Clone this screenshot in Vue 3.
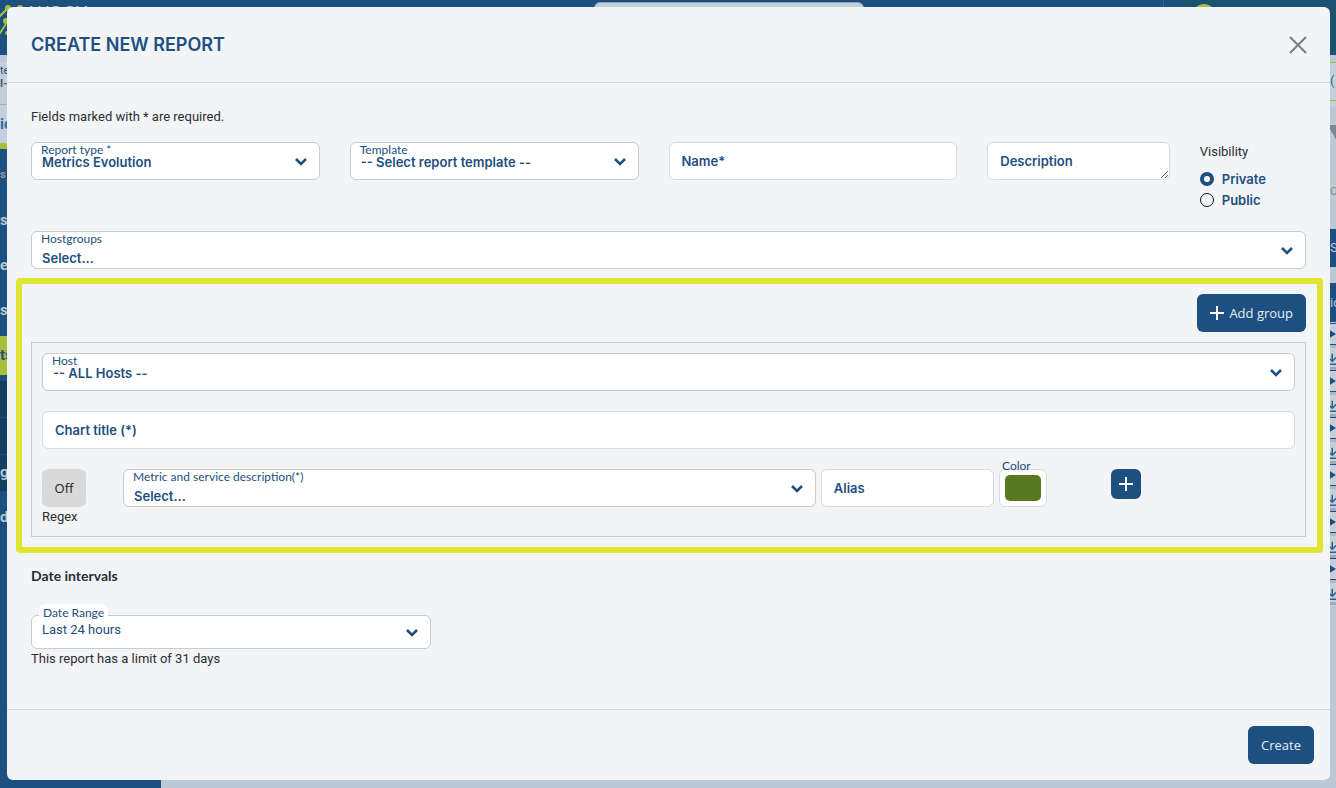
<script setup>
import { ref } from 'vue'

const reportType = ref('Metrics Evolution')
const template = ref('-- Select report template --')
const visibility = ref('Private')
const hostgroup = ref('Select...')
const host = ref('-- ALL Hosts --')
const metric = ref('Select...')
const range = ref('Last 24 hours')
const color = ref('#5a7821')
const regex = ref(false)
const reportRows = 6
</script>

<template>
  <div class="page">
    <div class="backdrop" aria-hidden="true">
      <header class="topbar">
        <svg class="logo" width="24" height="40" viewBox="0 0 24 40">
          <g stroke="#a9bf3c" stroke-width="2" fill="#a9bf3c">
            <path d="M-2 18L8 8M20 8L6 22M-2 36L6 24" fill="none" />
            <circle cx="8" cy="8" r="2" />
            <circle cx="20" cy="8" r="2" />
            <circle cx="6" cy="21" r="2" />
            <circle cx="7" cy="33" r="1" />
          </g>
        </svg>
        <span class="brand">WOCU</span>
        <span class="search"></span>
        <span class="account"><span class="avatar"></span></span>
      </header>
      <div class="columns">
        <div class="rail">
          <div class="realm"><span class="realm-label">te</span><span class="realm-name">I-</span></div>
          <div class="tab">ic</div>
          <div class="item warm">s</div>
          <div class="item">s</div>
          <div class="item">er</div>
          <div class="item">s</div>
          <div class="item active">ts</div>
          <div class="sub"></div>
          <div class="sub"></div>
          <div class="sub">g</div>
          <div class="item last">d</div>
        </div>
        <div class="edge">
          <div class="crumb">(</div>
          <div class="filter"></div>
          <div class="caption">C</div>
          <div class="chip">Sc</div>
          <div class="thead">ic</div>
          <div v-for="n in reportRows" :key="n" class="actions">
            <div class="play"><svg width="8" height="12" viewBox="0 0 8 12"><path d="M0 1L8 6L0 11Z" fill="#1d4f80" /></svg></div>
            <div class="save"><svg width="8" height="16" viewBox="0 0 8 16"><path d="M3 1V11M0 8L3 11L8 6M0 15H8" fill="none" stroke="#2b6191" stroke-width="2" /></svg></div>
          </div>
        </div>
      </div>
    </div>

    <section class="modal" role="dialog" aria-labelledby="dialog-title">
      <header class="modal-head">
        <h1 id="dialog-title">CREATE NEW REPORT</h1>
        <button class="close" type="button" aria-label="Close">
          <svg width="18" height="18" viewBox="0 0 18 18"><path d="M1 1L17 17M17 1L1 17" stroke="#7b7d80" stroke-width="2" fill="none" /></svg>
        </button>
      </header>

      <form class="modal-body" @submit.prevent>
        <p class="note">Fields marked with * are required.</p>

        <div class="row">
          <div class="cell">
            <div class="field">
              <label for="type">Report type *</label>
              <select id="type" v-model="reportType"><option>Metrics Evolution</option></select>
              <svg class="chevron" viewBox="0 0 12 8"><path d="M1 1L6 6L11 1" /></svg>
            </div>
          </div>
          <div class="cell">
            <div class="field">
              <label for="template">Template</label>
              <select id="template" v-model="template"><option>-- Select report template --</option></select>
              <svg class="chevron" viewBox="0 0 12 8"><path d="M1 1L6 6L11 1" /></svg>
            </div>
          </div>
          <div class="cell"><input class="text" type="text" placeholder="Name*" aria-label="Name" /></div>
          <div class="cell"><textarea class="text" placeholder="Description" aria-label="Description"></textarea></div>
          <fieldset class="visibility">
            <legend>Visibility</legend>
            <label><input v-model="visibility" type="radio" name="visibility" value="Private" />Private</label>
            <label><input v-model="visibility" type="radio" name="visibility" value="Public" />Public</label>
          </fieldset>
        </div>

        <div class="field low">
          <label for="hostgroups">Hostgroups</label>
          <select id="hostgroups" v-model="hostgroup"><option>Select...</option></select>
          <svg class="chevron" viewBox="0 0 12 8"><path d="M1 1L6 6L11 1" /></svg>
        </div>

        <section class="groups">
          <button class="primary add" type="button">
            <svg width="14" height="14" viewBox="0 0 14 14"><path d="M7 0V14M0 7H14" stroke="#fff" stroke-width="2" /></svg>
            Add group
          </button>
          <div class="group">
            <div class="field">
              <label for="host">Host</label>
              <select id="host" v-model="host"><option>-- ALL Hosts --</option></select>
              <svg class="chevron" viewBox="0 0 12 8"><path d="M1 1L6 6L11 1" /></svg>
            </div>
            <input class="text" type="text" placeholder="Chart title (*)" aria-label="Chart title" />
            <div class="metric">
              <div class="regex">
                <button id="regex" class="toggle" type="button" :aria-pressed="regex" @click="regex = !regex">{{ regex ? 'On' : 'Off' }}</button>
                <label for="regex">Regex</label>
              </div>
              <div class="field low">
                <label for="metric">Metric and service description(*)</label>
                <select id="metric" v-model="metric"><option>Select...</option></select>
                <svg class="chevron" viewBox="0 0 12 8"><path d="M1 1L6 6L11 1" /></svg>
              </div>
              <input class="text" type="text" placeholder="Alias" aria-label="Alias" />
              <div class="swatch">
                <label for="color">Color</label>
                <input id="color" v-model="color" type="color" />
              </div>
              <div class="more">
                <button class="primary plus" type="button" aria-label="Add metric">
                  <svg width="14" height="14" viewBox="0 0 14 14"><path d="M7 0V14M0 7H14" stroke="#fff" stroke-width="2" /></svg>
                </button>
              </div>
            </div>
          </div>
        </section>

        <h2>Date intervals</h2>
        <div class="field range">
          <label for="range">Date Range</label>
          <select id="range" v-model="range"><option>Last 24 hours</option></select>
          <svg class="chevron" viewBox="0 0 12 8"><path d="M1 1L6 6L11 1" /></svg>
        </div>
        <p class="limit">This report has a limit of 31 days</p>
      </form>

      <footer class="modal-foot">
        <button class="primary" type="button">Create</button>
      </footer>
    </section>
  </div>
</template>

<style>
body {
  margin: 0;
  background: #bcc8d4;
}
</style>

<style scoped>
* {
  box-sizing: border-box;
}
.page {
  position: relative;
  min-height: 100vh;
  padding: 7px 6px 8px 7px;
  font: 13px/20px Roboto, "Liberation Sans", sans-serif;
  color: #2b2e33;
}
button,
input,
select,
textarea {
  font: inherit;
  margin: 0;
}

/* dimmed application behind the dialog */
.backdrop {
  position: absolute;
  inset: 0;
  overflow: hidden;
  display: flex;
  flex-direction: column;
}
.topbar {
  flex: none;
  height: 55px;
  display: flex;
  align-items: flex-start;
  background: #1d4f80;
}
.logo {
  flex: none;
}
.brand {
  width: 64px;
  margin: 2px 0 0 6px;
  font: 18px/20px Lato, sans-serif;
  color: #b9c6d2;
}
.search {
  width: 270px;
  height: 34px;
  margin: 2px auto 0 500px;
  border: 1px solid #8f9fae;
  border-radius: 6px;
  background: #c3d0db;
}
.account {
  width: 173px;
  height: 55px;
  padding: 4px 0 0 28px;
  border-left: 1px solid #34698a;
  background: linear-gradient(90deg, #1d4f80, #1c5373 20px);
}
.avatar {
  display: block;
  width: 24px;
  height: 24px;
  border-radius: 50%;
  background: #a9bf3c;
}
.columns {
  flex: 1;
  display: flex;
  justify-content: space-between;
}
.rail {
  width: 161px;
  background: #1d4f80;
  color: #b9c6d2;
  font-size: 15px;
  font-weight: 700;
}
.realm {
  height: 50px;
  padding-top: 2px;
  background: #c3d0db;
  border-top: 7px solid #bcc8d4;
  border-bottom: 1px solid #9dabb8;
  color: #1d4f80;
  font-size: 11px;
  line-height: 13px;
}
.realm-label {
  display: block;
  font-weight: 400;
}
.realm-name {
  display: block;
  color: #5b4a6a;
}
.tab {
  height: 44px;
  line-height: 38px;
  background: #c3d0db;
  border-bottom: 6px solid #a9bf3c;
  color: #2c6da6;
}
.item {
  height: 39px;
  margin-bottom: 6px;
  line-height: 38px;
}
.warm {
  margin-top: 7px;
  color: #a09a98;
  font-size: 11px;
}
.active {
  background: #a9bf3c;
  color: #1d4f80;
}
.sub {
  height: 37px;
  line-height: 35px;
  background: #133e60;
  border-bottom: 1px solid #1d4f80;
}
.last {
  margin-top: 6px;
}
.edge {
  width: 6px;
  overflow: hidden;
  color: #b9c6d2;
}
.crumb {
  height: 45px;
  margin-top: 7px;
  line-height: 36px;
  border-top: 1px solid #a9bf3c;
  border-bottom: 6px solid #c3d0db;
  box-shadow: inset 0 -1px #a9bf3c;
  background: #c3d0db;
  color: #2c6da6;
}
.filter {
  height: 14px;
  margin-top: 18px;
  background: linear-gradient(60deg, #bcc8d4 40%, #7b8894 41%);
}
.caption {
  height: 90px;
  line-height: 106px;
  font-size: 11px;
  color: #7b8894;
}
.chip {
  height: 38px;
  line-height: 38px;
  background: #1d4f80;
}
.thead {
  height: 39px;
  margin: 16px 0 1px;
  line-height: 39px;
  background: #1d4f80;
}
.actions {
  height: 47px;
  padding-bottom: 3px;
  background: #9dabb8;
}
.play {
  display: flex;
  align-items: center;
  height: 22px;
  background: #c3d0db;
  border-top: 1px solid #1d4f80;
  border-bottom: 1px solid #1d4f80;
}
.save {
  display: flex;
  align-items: flex-end;
  height: 22px;
  background: #c3d0db;
  border-top: 3px solid #adbac6;
}

/* dialog */
.modal {
  position: relative;
  background: #f2f4f6;
  border-radius: 6px;
}
.modal-head {
  display: flex;
  align-items: center;
  justify-content: space-between;
  height: 76px;
  padding: 0 23px 0 24px;
  border-bottom: 1px solid #d5d8db;
}
h1 {
  margin: 0;
  font: 600 18px/24px Inter, Lato, sans-serif;
  color: #1d4f80;
}
.close {
  display: flex;
  padding: 0;
  border: 0;
  background: none;
}
.modal-body {
  padding: 24px;
}
.note {
  margin: 0 0 15px;
}
.row {
  display: grid;
  grid-template-columns: 3fr 3fr 3fr 2fr 1fr;
  height: 89px;
}
.cell {
  min-width: 0;
  padding-right: 30px;
}
.field {
  position: relative;
}
.field label,
.swatch label {
  position: absolute;
  left: 10px;
  top: 0;
  font: 12px/15px Lato, sans-serif;
  color: #1d4f80;
}
select,
.text {
  display: block;
  width: 100%;
  height: 38px;
  border: 1px solid #c8cacc;
  border-radius: 6px;
  background: #fff;
  color: #1d4f80;
  font: 600 13px/18px Inter, Lato, sans-serif;
}
select {
  appearance: none;
  padding: 2px 30px 0 10px;
}
.low select {
  padding-top: 16px;
}
.text {
  padding: 9px 12px;
  border-color: #d8dadc;
  resize: vertical;
}
.text::placeholder {
  color: #1d4f80;
  opacity: 1;
}
.chevron {
  position: absolute;
  right: 13px;
  top: calc(50% - 3px);
  width: 12px;
  height: 8px;
  overflow: visible;
  pointer-events: none;
}
.chevron path {
  fill: none;
  stroke: #1d4f80;
  stroke-width: 2.6;
}
.visibility {
  min-width: 0;
  margin: 0;
  padding: 0;
  border: 0;
}
.visibility legend {
  padding: 0;
  margin-bottom: 6px;
}
.visibility label {
  display: flex;
  align-items: center;
  gap: 8px;
  height: 21px;
  color: #1d4f80;
  font: 600 13px/18px Inter, Lato, sans-serif;
}
.visibility input {
  appearance: none;
  width: 14px;
  height: 14px;
  border: 1px solid #111;
  border-radius: 50%;
}
.visibility input:checked {
  border: 4px solid #1d4f80;
  background: #fff;
}
.groups {
  display: flex;
  flex-direction: column;
  align-items: flex-end;
  gap: 10px;
  margin: 9px -17px 0 -15px;
  padding: 10px 11px 10px 9px;
  border: 6px solid #dfe62f;
  border-radius: 4px;
}
.group {
  display: flex;
  flex-direction: column;
  gap: 20px;
  align-self: stretch;
  padding: 10px;
  border: 1px solid #c8cacc;
}
.primary {
  display: inline-flex;
  align-items: center;
  justify-content: center;
  gap: 5px;
  height: 38px;
  padding: 0 13px;
  border: 0;
  border-radius: 6px;
  background: #1d4f80;
  color: #e8eef4;
  font: 13px/18px "Open Sans", sans-serif;
}
.metric {
  display: grid;
  grid-template-columns: 76px 4fr 1fr 48px 243px;
  align-items: start;
  gap: 5px;
}
.metric > * {
  min-width: 0;
}
.regex label {
  display: block;
  line-height: 19px;
}
.toggle {
  display: block;
  width: 44px;
  height: 38px;
  padding: 0;
  border: 0;
  border-radius: 6px;
  background: #d9d9d9;
  color: #222;
  font: 13px/18px "Open Sans", sans-serif;
}
.swatch {
  position: relative;
}
.swatch label {
  left: 3px;
  top: -11px;
}
.swatch input {
  display: block;
  width: 48px;
  height: 38px;
  padding: 5px;
  border: 1px solid #d8dadc;
  border-radius: 6px;
  background: #fff;
}
.swatch input::-webkit-color-swatch-wrapper {
  padding: 0;
}
.swatch input::-webkit-color-swatch {
  border: 0;
  border-radius: 5px;
}
.more {
  padding-left: 59px;
}
.plus {
  width: 30px;
  height: 30px;
  padding: 0;
}
h2 {
  margin: 13px 0 29px;
  font: 700 14px/20px Lato, sans-serif;
}
.range {
  width: 400px;
  max-width: 100%;
}
.range label {
  left: 8px;
  top: -11px;
  padding: 1px 4px 0;
  border-radius: 6px 6px 0 0;
  background: #fff;
}
.range select {
  height: 34px;
  padding-top: 0;
  padding-bottom: 4px;
  font: 13px/18px Roboto, "Liberation Sans", sans-serif;
}
.limit {
  margin: 0 0 16px;
}
.modal-foot {
  display: flex;
  justify-content: flex-end;
  padding: 16px;
  border-top: 1px solid #d5d8db;
}
</style>
